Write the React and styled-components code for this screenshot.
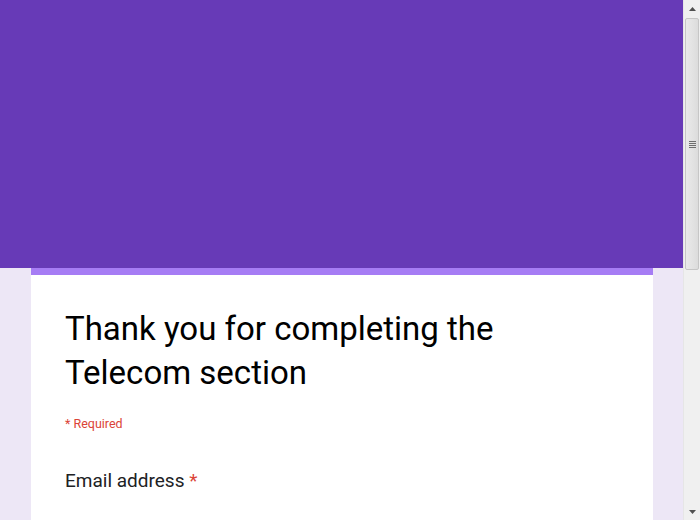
import React from "react";
import styled, { createGlobalStyle } from "styled-components";

const GlobalStyle = createGlobalStyle`
  html, body {
    margin: 0;
    padding: 0;
    height: 100%;
    overflow: hidden;
  }
  body {
    font-family: Roboto, "Liberation Sans", Arial, sans-serif;
    background: #ede7f6;
  }
`;

const Window = styled.div`
  display: flex;
  width: 700px;
  height: 520px;
  overflow: hidden;
`;

const Page = styled.div`
  flex: 1;
  display: flex;
  flex-direction: column;
  background: #ede7f6;
  overflow: hidden;
`;

const Header = styled.div`
  height: 268px;
  flex-shrink: 0;
  background: #673ab7;
`;

const Card = styled.div`
  margin: 0 30px 0 31px;
  background: #fff;
  border-top: 7px solid #a67cf4;
  padding: 32px 34px 0;
  flex: 1;
`;

const Title = styled.h1`
  margin: 0;
  font-size: 33px;
  font-weight: 400;
  line-height: 44px;
  color: #000;
  max-width: 500px;
`;

const RequiredNote = styled.div`
  margin-top: 21px;
  font-size: 12.5px;
  color: #db4437;
`;

const Question = styled.div`
  margin-top: 38px;
  font-size: 19px;
  color: #202124;
`;

const Star = styled.span`
  color: #db4437;
`;

const Scrollbar = styled.div`
  width: 17px;
  flex-shrink: 0;
  display: flex;
  flex-direction: column;
  background: #f0f0f0;
  border-left: 1px solid #e6e6e6;
  box-sizing: border-box;
`;

const Arrow = styled.div`
  height: 17px;
  display: flex;
  align-items: center;
  justify-content: center;
  svg {
    display: block;
  }
`;

const Thumb = styled.div`
  height: 250px;
  margin: 1px 1px;
  background: linear-gradient(to right, #eaeaea, #dcdcdc);
  border: 1px solid #c6c6c6;
  border-radius: 2px;
  display: flex;
  align-items: center;
  justify-content: center;
`;

const Grip = styled.div`
  width: 7px;
  height: 7px;
  background: repeating-linear-gradient(
    to bottom,
    #6f6f6f 0,
    #6f6f6f 1px,
    transparent 1px,
    transparent 2px
  );
`;

const Track = styled.div`
  flex: 1;
`;

function Triangle({ down }) {
  return (
    <svg width="7" height="4" viewBox="0 0 7 4">
      <polygon
        points={down ? "0,0 7,0 3.5,4" : "3.5,0 7,4 0,4"}
        fill="#505050"
      />
    </svg>
  );
}

export default function App() {
  return (
    <>
      <GlobalStyle />
      <Window>
        <Page>
          <Header />
          <Card>
            <Title>Thank you for completing the Telecom section</Title>
            <RequiredNote>* Required</RequiredNote>
            <Question>
              Email address <Star>*</Star>
            </Question>
          </Card>
        </Page>
        <Scrollbar>
          <Arrow>
            <Triangle />
          </Arrow>
          <Thumb>
            <Grip />
          </Thumb>
          <Track />
          <Arrow>
            <Triangle down />
          </Arrow>
        </Scrollbar>
      </Window>
    </>
  );
}
